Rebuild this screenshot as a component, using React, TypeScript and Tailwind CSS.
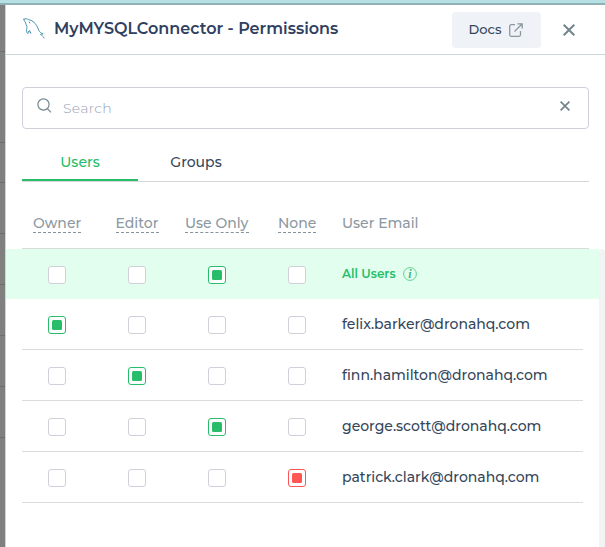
type Level = 'owner' | 'editor' | 'use' | 'none';

const levels: Level[] = ['owner', 'editor', 'use', 'none'];

const users: { email: string; level: Level }[] = [
  { email: 'felix.barker@dronahq.com', level: 'owner' },
  { email: 'finn.hamilton@dronahq.com', level: 'editor' },
  { email: 'george.scott@dronahq.com', level: 'use' },
  { email: 'patrick.clark@dronahq.com', level: 'none' },
];

const columns = [
  { label: 'Owner', className: 'w-12' },
  { label: 'Editor', className: 'w-[43px]' },
  { label: 'Use Only', className: 'w-16' },
  { label: 'None', className: 'w-[38px]' },
];

const backdropRows = ['h-[47px]', 'h-[91px]', 'h-10', 'h-[51px]', 'h-[51px]', 'h-[51px]', 'h-[51px]', 'h-[51px]'];

function Dolphin() {
  return (
    <svg className="mb-px" width="24" height="22" viewBox="0 0 24 22" fill="none" stroke="#4d93ad" strokeLinecap="round" strokeLinejoin="round">
      <path d="M.8 1.200C2.300.400 4.300.700 5.800 1.700c3.100.500 5.900 2.800 7.800 5.700 1 1.700 1.600 3.500 2.400 5.300.700 1.500 2.300 2.600 4.200 3.100-1.100.200-2 .300-2.700.700 1.300 1.300 3 1.600 3.600 3.500" />
      <path d="M.8 1.200c.200 1.600 1.400 2.500 1.800 3.800.400 1.200.700 2.400 1.300 3.400.400 1.200-.700 2.900-.300 4.700.200 1.100.400 2 1.100 2.600.700-.400.700-1.800 1-2.700.900 1 1.200 1.700 2.200 2.300-.400-1-1-1.700-1.200-2.600" />
      <path d="M6.300 4.100l.4.900" />
    </svg>
  );
}

function Cross({ size }: { size: number }) {
  return (
    <svg width={size} height={size} viewBox="0 0 12 12" stroke="#73838c" strokeWidth="2">
      <path d="M.7.7l10.600 10.600M11.300.7L.7 11.300" />
    </svg>
  );
}

function Check({ on, danger }: { on: boolean; danger?: boolean }) {
  const border = !on ? 'border-[#d0d0dc]' : danger ? 'border-[#ff5555]' : 'border-[#27bd69]';
  return (
    <div className="flex w-20 justify-center">
      <div className={`flex size-[18px] items-center justify-center rounded-[3px] border bg-white ${border}`}>
        {on && <div className={`size-2.5 rounded-[1.5px] ${danger ? 'bg-[#ff5555]' : 'bg-[#27bd69]'}`} />}
      </div>
    </div>
  );
}

export default function App() {
  return (
    <div className="flex h-[547px] w-[605px] flex-col overflow-hidden bg-white font-['Montserrat','Inter',sans-serif] text-sm font-medium text-[#34465a]">
      <div className="h-[5px] shrink-0 border-b-2 border-[#90b2b5] bg-[#b6e0e4]" />
      <div className="flex min-h-0 flex-1">
        <div className="w-[5px] shrink-0 bg-[#808080]">
          {backdropRows.map((h, i) => (
            <div key={i} className={`border-b border-[#6e6e6e] ${h}`} />
          ))}
        </div>
        <div className="flex min-w-0 flex-1 flex-col border-l border-[#d4d4d4]">
          <header className="flex h-[50px] shrink-0 items-center border-b border-[#cdd6d8] pl-[17px]">
            <Dolphin />
            <h1 className="mb-0.5 ml-[7px] w-[398px] text-base leading-6 font-semibold whitespace-nowrap text-[#2f4060]">MyMYSQLConnector - Permissions</h1>
            <button className="flex h-9 w-[89px] items-center gap-[7px] rounded bg-[#eff2f7] pl-4">
              <span className="w-[34px] text-[13px] whitespace-nowrap">Docs</span>
              <svg width="14" height="14" viewBox="0 0 14 14" fill="none" stroke="#8b989d" strokeWidth="1.300">
                <path d="M6 1.700H2.200C1.300 1.700.7 2.300.7 3.200v8.600c0 .900.600 1.500 1.500 1.500H10c.900 0 1.500-.600 1.500-1.500V8M8.500.8h4.700v4.700M13 1L5.500 8.500" />
              </svg>
            </button>
            <button className="ml-[22px]">
              <Cross size={12} />
            </button>
          </header>

          <div className="mt-8 ml-4 flex h-[42px] w-[567px] shrink-0 items-center rounded border border-[#d0d0dc] pl-3.5">
            <svg className="mb-[5px]" width="15" height="15" viewBox="0 0 15 15" fill="none" stroke="#73868f" strokeWidth="1.200">
              <circle cx="6.500" cy="6.500" r="5.600" />
              <path d="M10.400 10.600l3.600 3.800" />
            </svg>
            <span className="ml-[11px] flex-1 font-light text-[#98a3b5] tracking-[0.3px]">Search</span>
            <span className="mr-[18px] mb-1">
              <Cross size={10} />
            </span>
          </div>

          <nav className="mt-3.5 ml-4 flex h-[39px] w-[567px] shrink-0 border-b border-[#d5d8da]">
            <div className="flex w-[116px] justify-center border-b-2 border-[#27bd69] pt-[9px] text-[#27bd69]">Users</div>
            <div className="flex w-[116px] justify-center pt-[9px]">Groups</div>
          </nav>

          <div className="ml-4 flex h-[67px] w-[567px] shrink-0 border-b border-[#d6dcd9] pt-[31px] text-[#8b98a1]">
            <div className="-ml-[5px] flex">
              {columns.map((c) => (
                <div key={c.label} className="flex w-20 justify-center">
                  <span className={`h-5 border-b border-dashed border-[#84929b] whitespace-nowrap ${c.className}`}>{c.label}</span>
                </div>
              ))}
            </div>
            <span className="ml-[5px]">User Email</span>
          </div>

          <div className="flex min-h-0 flex-1">
            <div className="w-[593px]">
              <div className="flex h-[50px] items-center bg-[#e1feef] pl-[11px]">
                <div className="flex pt-px">
                  {levels.map((l) => (
                    <Check key={l} on={l === 'use'} />
                  ))}
                </div>
                <span className="ml-[5px] w-[54px] text-xs font-semibold whitespace-nowrap text-[#27bd69]">All Users</span>
                <svg className="ml-[7px]" width="14" height="14" viewBox="0 0 14 14">
                  <circle cx="7" cy="7" r="6.400" fill="none" stroke="#62cf91" />
                  <text x="7" y="10.500" textAnchor="middle" fontFamily="Liberation Serif, serif" fontStyle="italic" fontWeight="bold" fontSize="12" fill="#45b97a">i</text>
                </svg>
              </div>
              {users.map((u) => (
                <div key={u.email} className="ml-4 flex h-[51px] w-[561px] items-center border-b border-[#d9dbdc]">
                  <div className="-ml-[5px] flex pt-0.5">
                    {levels.map((l) => (
                      <Check key={l} on={l === u.level} danger={l === 'none'} />
                    ))}
                  </div>
                  <span className="ml-[5px] whitespace-nowrap">{u.email}</span>
                </div>
              ))}
            </div>
            <div className="flex-1 rounded-t bg-[#f3f3f3]" />
          </div>
        </div>
      </div>
    </div>
  );
}
